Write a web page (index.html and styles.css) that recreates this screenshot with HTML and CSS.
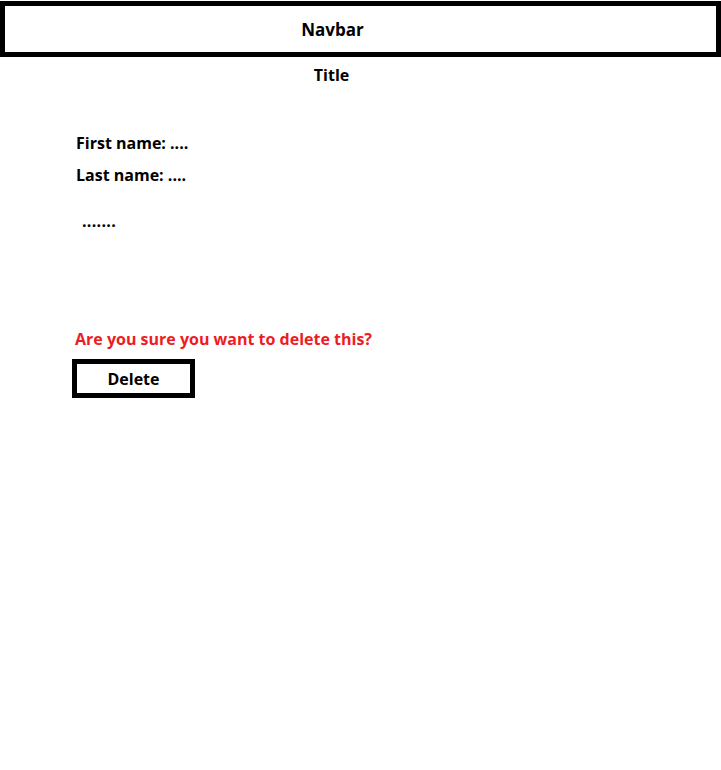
FILE: index.html
```html
<!DOCTYPE html>
<html>
<head>
<meta charset="utf-8">
<link rel="stylesheet" href="styles.css">
</head>
<body>
<header class="navbar"><span class="navbar-label">Navbar</span></header>
<h1 class="title">Title</h1>
<main class="content">
  <p class="field">First name: ....</p>
  <p class="field">Last name: ....</p>
  <p class="extra">.......</p>
  <p class="warning">Are you sure you want to delete this?</p>
  <button class="delete-btn">Delete</button>
</main>
</body>
</html>
```

FILE: styles.css
```css
* { box-sizing: border-box; }
html, body { margin: 0; padding: 0; background: #fff; }
body {
  font-family: "Open Sans", Lato, sans-serif;
  font-weight: 700;
  color: #000;
  width: 721px;
  height: 770px;
  overflow: hidden;
}
.navbar {
  margin-top: 1px;
  height: 56px;
  border: 5px solid #000;
  display: flex;
  align-items: center;
  justify-content: center;
  padding-right: 56px;
}
.navbar-label { font-size: 17px; }
.title {
  margin: 7px 0 0;
  font-size: 16px;
  line-height: 22px;
  text-align: center;
  padding-right: 58px;
  font-weight: 700;
}
.content {
  padding-left: 76px;
  padding-top: 46px;
  display: flex;
  flex-direction: column;
  align-items: flex-start;
}
.field { margin: 0 0 10px; font-size: 16px; line-height: 22px; }
.extra { margin: 14px 0 0 6px; font-size: 16px; line-height: 22px; letter-spacing: 0.3px; }
.warning {
  margin: 96px 0 0 -1px;
  font-size: 16px;
  line-height: 22px;
  color: #ed1c24;
}
.delete-btn {
  margin: 9px 0 0 -4px;
  width: 123px;
  height: 39px;
  border: 5px solid #000;
  background: #fff;
  font-family: inherit;
  font-weight: 700;
  font-size: 16px;
  color: #000;
  padding: 0;
}
```
